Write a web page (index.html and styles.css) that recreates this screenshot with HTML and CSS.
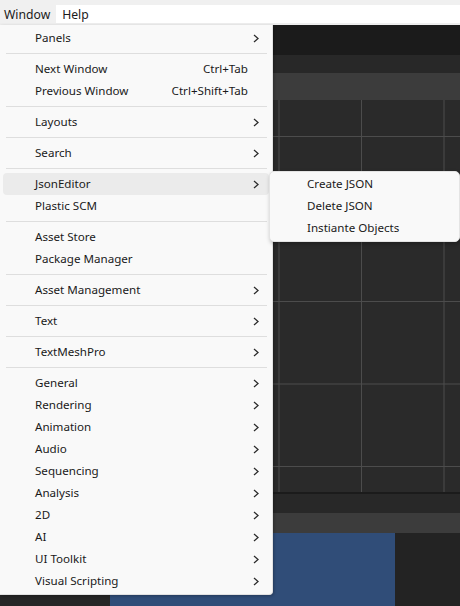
FILE: index.html
```html
<!DOCTYPE html>
<html>
<head>
<meta charset="utf-8">
<link rel="stylesheet" href="styles.css">
</head>
<body>
<div class="top-strip"></div>
<div class="menubar">
  <span class="mb-item active">Window</span>
  <span class="mb-item">Help</span>
</div>
<div class="editor">
  <div class="bar bar-a"></div>
  <div class="bar bar-b"></div>
  <div class="bar bar-c"></div>
  <div class="grid"></div>
  <div class="bar bar-line"></div>
  <div class="bar bar-d"></div>
  <div class="bar bar-e"></div>
  <div class="bottom-row">
    <div class="pane-dark-left"></div>
    <div class="pane-blue"></div>
    <div class="pane-dark"></div>
  </div>
</div>

<div class="menu">
  <div class="item"><span class="label">Panels</span><svg class="chev" viewBox="0 0 6 9"><path d="M1 1 L5 4.5 L1 8"/></svg></div>
  <div class="sep"></div>
  <div class="item"><span class="label">Next Window</span><span class="shortcut">Ctrl+Tab</span></div>
  <div class="item"><span class="label">Previous Window</span><span class="shortcut">Ctrl+Shift+Tab</span></div>
  <div class="sep"></div>
  <div class="item"><span class="label">Layouts</span><svg class="chev" viewBox="0 0 6 9"><path d="M1 1 L5 4.5 L1 8"/></svg></div>
  <div class="sep"></div>
  <div class="item"><span class="label">Search</span><svg class="chev" viewBox="0 0 6 9"><path d="M1 1 L5 4.5 L1 8"/></svg></div>
  <div class="sep"></div>
  <div class="item hover"><span class="label">JsonEditor</span><svg class="chev" viewBox="0 0 6 9"><path d="M1 1 L5 4.5 L1 8"/></svg></div>
  <div class="item"><span class="label">Plastic SCM</span></div>
  <div class="sep"></div>
  <div class="item"><span class="label">Asset Store</span></div>
  <div class="item"><span class="label">Package Manager</span></div>
  <div class="sep"></div>
  <div class="item"><span class="label">Asset Management</span><svg class="chev" viewBox="0 0 6 9"><path d="M1 1 L5 4.5 L1 8"/></svg></div>
  <div class="sep"></div>
  <div class="item"><span class="label">Text</span><svg class="chev" viewBox="0 0 6 9"><path d="M1 1 L5 4.5 L1 8"/></svg></div>
  <div class="sep"></div>
  <div class="item"><span class="label">TextMeshPro</span><svg class="chev" viewBox="0 0 6 9"><path d="M1 1 L5 4.5 L1 8"/></svg></div>
  <div class="sep"></div>
  <div class="item"><span class="label">General</span><svg class="chev" viewBox="0 0 6 9"><path d="M1 1 L5 4.5 L1 8"/></svg></div>
  <div class="item"><span class="label">Rendering</span><svg class="chev" viewBox="0 0 6 9"><path d="M1 1 L5 4.5 L1 8"/></svg></div>
  <div class="item"><span class="label">Animation</span><svg class="chev" viewBox="0 0 6 9"><path d="M1 1 L5 4.5 L1 8"/></svg></div>
  <div class="item"><span class="label">Audio</span><svg class="chev" viewBox="0 0 6 9"><path d="M1 1 L5 4.5 L1 8"/></svg></div>
  <div class="item"><span class="label">Sequencing</span><svg class="chev" viewBox="0 0 6 9"><path d="M1 1 L5 4.5 L1 8"/></svg></div>
  <div class="item"><span class="label">Analysis</span><svg class="chev" viewBox="0 0 6 9"><path d="M1 1 L5 4.5 L1 8"/></svg></div>
  <div class="item"><span class="label">2D</span><svg class="chev" viewBox="0 0 6 9"><path d="M1 1 L5 4.5 L1 8"/></svg></div>
  <div class="item"><span class="label">AI</span><svg class="chev" viewBox="0 0 6 9"><path d="M1 1 L5 4.5 L1 8"/></svg></div>
  <div class="item"><span class="label">UI Toolkit</span><svg class="chev" viewBox="0 0 6 9"><path d="M1 1 L5 4.5 L1 8"/></svg></div>
  <div class="item"><span class="label">Visual Scripting</span><svg class="chev" viewBox="0 0 6 9"><path d="M1 1 L5 4.5 L1 8"/></svg></div>
</div>

<div class="submenu">
  <div class="item"><span class="label">Create JSON</span></div>
  <div class="item"><span class="label">Delete JSON</span></div>
  <div class="item"><span class="label">Instiante Objects</span></div>
</div>
</body>
</html>
```

FILE: styles.css
```css
html, body {
  margin: 0;
  padding: 0;
}
body {
  width: 460px;
  height: 606px;
  overflow: hidden;
  background: #262626;
  font-family: "Noto Sans", "Open Sans", sans-serif;
  font-size: 11.6px;
  color: #1a1a1a;
  position: relative;
}
.top-strip {
  height: 5px;
  background: #f0f0f0;
}
.menubar {
  height: 18px;
  background: #ffffff;
  border-bottom: 2px solid #eeeeee;
  display: flex;
  align-items: stretch;
}
.mb-item {
  display: flex;
  align-items: center;
  padding: 0 7px 0 4px;
  font-size: 12.2px;
  color: #1a1a1a;
  margin-top: -5px;
  padding-top: 5px;
}
.mb-item.active {
  background: #f0f0f0;
  padding-right: 6px;
  margin-right: 2px;
}
.editor {
  display: flex;
  flex-direction: column;
}
.bar-a { height: 30px; background: #1b1b1b; }
.bar-b { height: 18px; background: #282828; }
.bar-c { height: 27px; background: #3c3c3c; }
.grid {
  height: 392px;
  background-color: #2a2a2a;
  background-image:
    linear-gradient(to right, #4c4c4c 1px, transparent 1px),
    linear-gradient(to bottom, #4c4c4c 1px, transparent 1px);
  background-size: 82.5px 82.5px, 82.5px 82.5px;
  background-position: 31px 0, 0 36px;
}
.bar-line { height: 2px; background: #1b1b1b; }
.bar-d { height: 19px; background: #282828; }
.bar-e { height: 20px; background: #3c3c3c; }
.bottom-row {
  display: flex;
  height: 73px;
}
.pane-dark-left { width: 110px; background: #262626; }
.pane-blue { width: 285px; background: #304d78; }
.pane-dark { flex: 1; background: #232323; }

.menu {
  position: absolute;
  left: 0;
  top: 25px;
  width: 272px;
  padding: 2px 0;
  background: #f9f9f9;
  border-right: 1px solid #e2e2e2;
  border-bottom: 1px solid #e2e2e2;
  border-radius: 0 0 4px 0;
  box-shadow: 1px 1px 3px rgba(0,0,0,0.25);
}
.item {
  height: 22px;
  box-sizing: border-box;
  display: flex;
  align-items: center;
  padding: 0 10px 2px 32px;
  margin: 0 3px;
  border-radius: 4px;
}
.item.hover {
  background: #ebebeb;
}
.label {
  flex: 1;
  white-space: nowrap;
}
.shortcut {
  white-space: nowrap;
  margin-right: 11px;
}
.chev {
  width: 6px;
  height: 9px;
  fill: none;
  stroke: #2b2b2b;
  stroke-width: 1.3;
  margin-top: 2px;
}
.sep {
  height: 1px;
  background: #dedede;
  margin: 4px 6px 4px 6px;
  width: 261px;
}
.submenu {
  position: absolute;
  left: 269px;
  top: 171px;
  width: 189px;
  padding: 2px 0 1px;
  background: #f9f9f9;
  border: 1px solid #e4e4e4;
  border-radius: 5px;
  box-shadow: 1px 2px 4px rgba(0,0,0,0.25);
}
.submenu .item {
  padding-left: 34px;
  margin-top: -1px;
  margin-bottom: 1px;
}
```
